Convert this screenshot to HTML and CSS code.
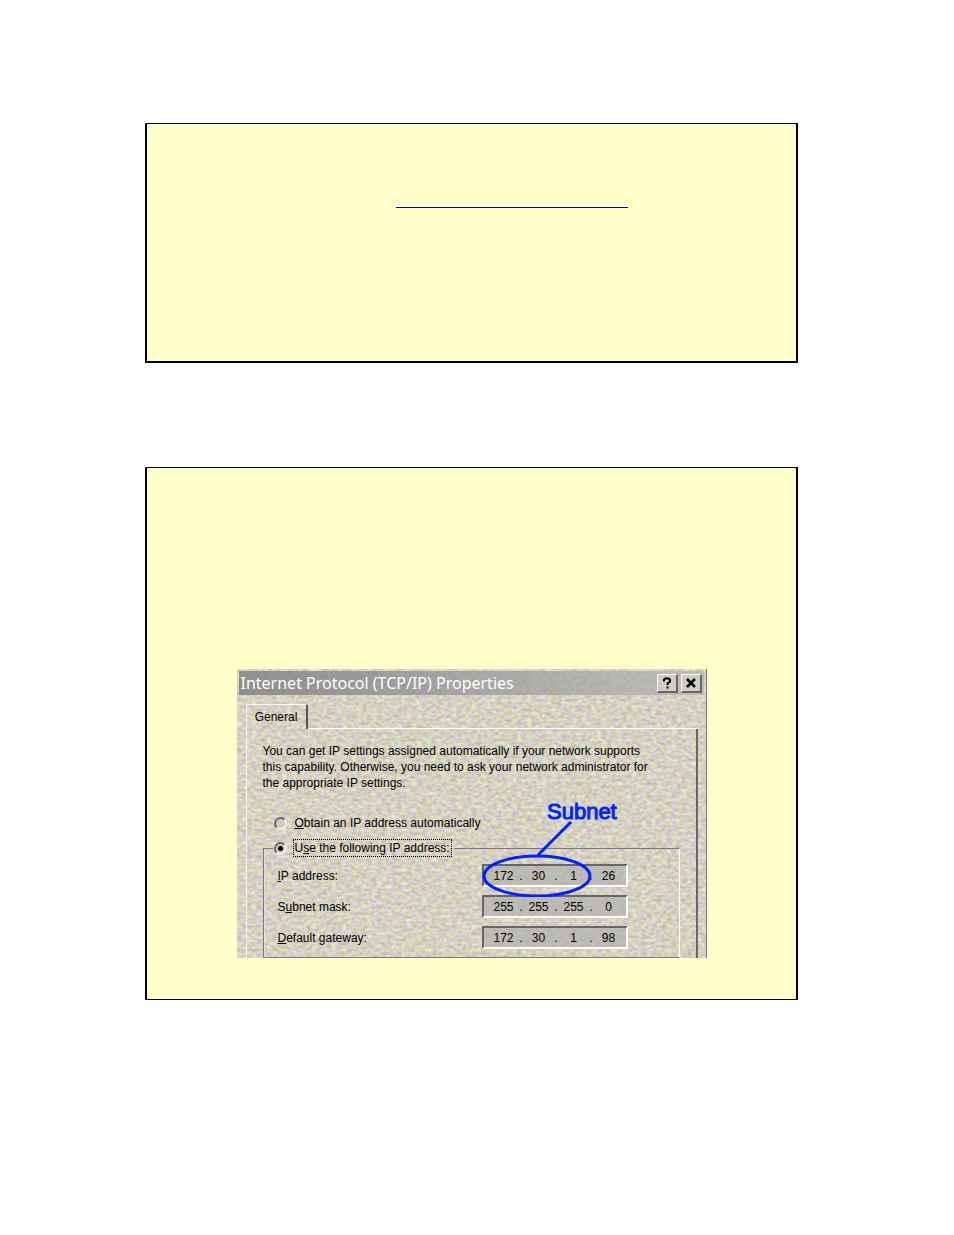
FILE: index.html
```html
<!DOCTYPE html>
<html lang="en">
<head>
    <meta charset="UTF-8">
    <meta name="viewport" content="width=device-width, initial-scale=1.0">
    <title>Internet Protocol (TCP/IP) Properties</title>
    <link rel="stylesheet" href="styles.css">
</head>
<body>
    <!-- Top note -->
    <div class="note note-top">
        <a class="note-link" href="#"></a>
    </div>

    <!-- Note with the TCP/IP dialog -->
    <div class="note note-dialog">
        <div class="dialog">
            <!-- Embossed paper texture -->
            <svg class="texture" aria-hidden="true">
                <filter id="paper" x="0" y="0" width="100%" height="100%" color-interpolation-filters="sRGB">
                    <feTurbulence type="fractalNoise" baseFrequency="0.2 0.3" numOctaves="2" seed="4"/>
                    <feColorMatrix type="matrix" values="0.2 0.16 0 0 0.66  0 0.34 0 0 0.65  0 0.1 0.4 0 0.51  0 0 0 0 1"/>
                </filter>
                <rect width="100%" height="100%" filter="url(#paper)"/>
            </svg>

            <div class="title-bar">
                <span class="title">Internet Protocol (TCP/IP) Properties</span>
                <button type="button" class="title-btn">
                    <svg width="10" height="12" viewBox="0 0 10 12"><path d="M2 4.500V2.500L3.500 1.500H6.500L8 2.500V4.500L5.500 6.500V8" fill="none" stroke="#000" stroke-width="2"/><path d="M4.500 9.500H6.500V11.500H4.500Z"/></svg>
                </button>
                <button type="button" class="title-btn">
                    <svg width="10" height="10" viewBox="0 0 10 10"><path d="M1 1L9 9M9 1L1 9" stroke="#000" stroke-width="2.500"/></svg>
                </button>
            </div>

            <div class="tabs">
                <button type="button" class="tab">General</button>
            </div>

            <div class="panel">
                <p class="intro">You can get IP settings assigned automatically if your network supports<br>this capability. Otherwise, you need to ask your network administrator for<br>the appropriate IP settings.</p>

                <div class="option">
                    <input type="radio" name="mode" id="modeAuto">
                    <label for="modeAuto"><u>O</u>btain an IP address automatically</label>
                </div>

                <fieldset class="group">
                    <legend class="option">
                        <input type="radio" name="mode" id="modeManual" checked>
                        <label for="modeManual" class="focused">U<u>s</u>e the following IP address:</label>
                    </legend>
                    <div class="row">
                        <label for="ip1"><u>I</u>P address:</label>
                        <div class="ip-field">
                            <input type="text" id="ip1" value="172"><span>.</span><input type="text" value="30"><span>.</span><input type="text" value="1"><span>.</span><input type="text" value="26">
                        </div>
                    </div>
                    <div class="row">
                        <label for="mask1">S<u>u</u>bnet mask:</label>
                        <div class="ip-field">
                            <input type="text" id="mask1" value="255"><span>.</span><input type="text" value="255"><span>.</span><input type="text" value="255"><span>.</span><input type="text" value="0">
                        </div>
                    </div>
                    <div class="row">
                        <label for="gate1"><u>D</u>efault gateway:</label>
                        <div class="ip-field">
                            <input type="text" id="gate1" value="172"><span>.</span><input type="text" value="30"><span>.</span><input type="text" value="1"><span>.</span><input type="text" value="98">
                        </div>
                    </div>
                </fieldset>
            </div>

            <!-- Blue callout round the subnet part -->
            <svg class="callout" width="140" height="100" viewBox="0 0 140 100">
                <text x="67" y="22">Subnet</text>
                <path d="M91 25L58 58"/>
                <ellipse cx="57" cy="79" rx="53" ry="20"/>
            </svg>
        </div>
    </div>
</body>
</html>
```

FILE: styles.css
```css
* {
    box-sizing: border-box;
}

body {
    margin: 0;
    padding: 123px 156px 0 145px;
    background-color: #fff;
    color: #000;
    font-family: "Liberation Sans", Arial, sans-serif;
    font-size: 12px;
}

/* Yellow notes */
.note {
    background-color: #ffc;
    border: solid #000;
    border-width: 1px 2px;
}

.note-top {
    border-bottom-width: 2px;
    padding: 83px 0 153px;
    margin-bottom: 104px;
}

.note-link {
    display: block;
    width: 232px;
    margin-left: 249px;
    border-bottom: 1px solid #0000e0;
}

.note-dialog {
    padding: 201px 0 41px;
}

/* Dialog */
.dialog {
    position: relative;
    width: 470px;
    margin: 0 auto;
    padding: 2px 2px 0;
    background-color: #cfcac0;
    overflow: hidden;
    isolation: isolate;
    border-right: 1px solid #77758c;
}

.texture {
    position: absolute;
    top: 0;
    left: 0;
    width: 100%;
    height: 100%;
    z-index: -1;
}

.title-bar {
    display: flex;
    align-items: center;
    gap: 3px;
    height: 24px;
    padding: 0 2px;
    background: linear-gradient(to right, rgba(126, 126, 132, 0.8), rgba(180, 180, 178, 0.7));
}

.title {
    flex: 1;
    color: #fff;
    font-family: "Noto Sans", sans-serif;
    font-size: 16px;
    white-space: nowrap;
}

.title-btn {
    display: flex;
    align-items: center;
    justify-content: center;
    width: 21px;
    height: 19px;
    padding: 0;
    background-color: #d0ccc6;
    border: solid;
    border-width: 1px 2px 2px 1px;
    border-color: #fff #66646c #66646c #fff;
}

/* Tab */
.tabs {
    display: flex;
    margin: 9px 0 0 7px;
}

.tab {
    width: 62px;
    height: 25px;
    padding: 0;
    background: none;
    border: solid;
    border-width: 1px 2px 0 1px;
    border-color: #f8f6f0 #55535c #fff #f8f6f0;
    border-radius: 3px 2px 0 0;
    font-family: inherit;
    font-size: 12px;
    color: #000;
}

.tabs::after {
    content: "";
    flex: 1;
    margin-right: 7px;
    border-bottom: 1px solid #fff;
}

.panel {
    margin: 0 6px 0 7px;
    padding: 14px 16px 0;
    border-left: 1px solid #f8f6f0;
    border-right: 2px solid #66646c;
}

.intro {
    margin: 0 0 23px;
    line-height: 16px;
    white-space: nowrap;
}

/* Radios */
.option {
    display: flex;
    align-items: center;
    gap: 6px;
    margin-left: 11px;
    height: 18px;
}

.option input {
    appearance: none;
    width: 13px;
    height: 13px;
    margin: 0;
    border: 2px solid;
    border-color: #66646c #f4f2ec #f4f2ec #66646c;
    border-radius: 50%;
    background-color: #cfcac4;
}

.option input:checked {
    background-image: radial-gradient(circle, #000 2px, transparent 3px);
}

.option label {
    padding: 0 1px;
    line-height: 16px;
    border: 1px solid transparent;
}

.option .focused {
    border: 1px dotted #000;
}

/* Group box */
.group {
    margin: 7px 0 0;
    padding: 7px 0 8px 14px;
    border: 1px solid #77758c;
    border-right-color: #fff;
    box-shadow: inset 1px 0 #e4e0d8;
}

.group legend {
    margin-left: -5px;
    padding: 0 2px 0 1px;
}

.row {
    display: flex;
    align-items: center;
    height: 23px;
}

.row + .row {
    margin-top: 8px;
}

.row > label {
    width: 204px;
}

.ip-field {
    display: flex;
    align-items: center;
    width: 146px;
    height: 23px;
    padding-left: 7px;
    background-color: rgba(176, 176, 174, 0.7);
    border: solid;
    border-width: 2px;
    border-color: #66646c #fff #fff #66646c;
}

.ip-field input {
    width: 26px;
    padding: 0;
    border: 0;
    background: none;
    color: #000;
    font-family: inherit;
    font-size: 12px;
    text-align: center;
}

.ip-field span {
    width: 9px;
    text-align: center;
}

/* Callout */
.callout {
    position: absolute;
    top: 128px;
    left: 243px;
    fill: none;
    stroke: #0022ff;
    stroke-width: 3px;
    pointer-events: none;
}

.callout text {
    fill: #0022ff;
    stroke-width: 1px;
    font-size: 22px;
}
```
